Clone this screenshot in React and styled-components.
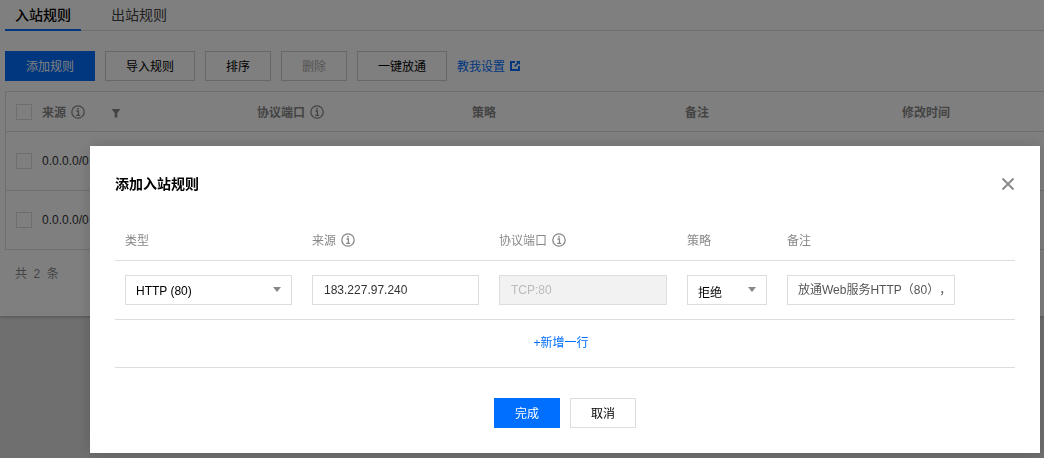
import styled, { createGlobalStyle } from "styled-components";

const FONT = `"Liberation Sans", Arial, "Noto Sans CJK SC", sans-serif`;

const GlobalStyle = createGlobalStyle`
  html, body {
    margin: 0;
    height: 100%;
    overflow: hidden;
    background: #dedede;
    font-family: ${FONT};
    font-size: 12px;
    color: #000;
  }
  * { box-sizing: border-box; }
`;

const InfoIcon = () => (
  <svg width="14" height="14" viewBox="0 0 14 14" fill="none" stroke="currentColor">
    <circle cx="7" cy="7" r="6.2" strokeWidth="1.3" />
    <path d="M5.5 6H7.4V10.2M5.2 10.3H9.2" strokeWidth="1.3" />
    <path d="M6.2 3H7.8V4.6H6.2Z" fill="currentColor" stroke="none" />
  </svg>
);

const App = () => {
  return (
    <>
      <GlobalStyle />
      <Page>
        <Tabs>
          <Tab $active>入站规则</Tab>
          <Tab>出站规则</Tab>
        </Tabs>
        <Toolbar>
          <Button $primary $width={90}>添加规则</Button>
          <Button $width={90}>导入规则</Button>
          <Button $width={66}>排序</Button>
          <Button $width={66} $disabled>删除</Button>
          <Button $width={90}>一键放通</Button>
          <HelpLink>
            教我设置
            <ExternalIcon width="10" height="10" viewBox="0 0 10 10">
              <path d="M0 0H5V2H2V8H8V5H10V10H0Z" fill="currentColor" />
              <path d="M6 0H10V4L8.6 2.6L5.2 6L4 4.8L7.4 1.4Z" fill="currentColor" />
            </ExternalIcon>
          </HelpLink>
        </Toolbar>
        <Table>
          <HeadRow>
            <SourceCell>
              <Check />
              <strong>来源</strong>
              <InfoIcon />
              <FilterIcon viewBox="0 0 10 10" width="10" height="10">
                <path d="M0.5 1H9.5L6.3 5V9.5H3.7V5Z" fill="currentColor" />
              </FilterIcon>
            </SourceCell>
            <HeadCell $width={215}><strong>协议端口</strong><InfoIcon /></HeadCell>
            <HeadCell $width={213}><strong>策略</strong></HeadCell>
            <HeadCell $width={217}><strong>备注</strong></HeadCell>
            <HeadCell $width={100}><strong>修改时间</strong></HeadCell>
          </HeadRow>
          {["0.0.0.0/0", "0.0.0.0/0"].map((source, index) => (
            <BodyRow key={index}>
              <Check />
              {source}
            </BodyRow>
          ))}
        </Table>
        <Total>共 2 条</Total>
      </Page>
      <Overlay>
        <Dialog>
          <DialogHead>
            <DialogTitle>添加入站规则</DialogTitle>
            <CloseIcon width="14" height="14" viewBox="0 0 14 14">
              <path d="M1.5 1.5L12.5 12.5M12.5 1.5L1.5 12.5" stroke="currentColor" strokeWidth="1.8" />
            </CloseIcon>
          </DialogHead>
          <FormHead>
            <TypeCol>类型</TypeCol>
            <SourceCol>来源<InfoIcon /></SourceCol>
            <PortCol>协议端口<InfoIcon /></PortCol>
            <PolicyCol>策略</PolicyCol>
            <NoteCol>备注</NoteCol>
          </FormHead>
          <FormRow>
            <TypeCol>
              <Select $width={167}>HTTP (80)<CaretShape /></Select>
            </TypeCol>
            <SourceCol>
              <Field $width={167}>183.227.97.240</Field>
            </SourceCol>
            <PortCol>
              <Field $width={168} $disabled>TCP:80</Field>
            </PortCol>
            <PolicyCol>
              <Select $width={80}>拒绝<CaretShape /></Select>
            </PolicyCol>
            <NoteCol>
              <NoteField $width={168}>放通Web服务HTTP（80），</NoteField>
            </NoteCol>
          </FormRow>
          <AddRow>+新增一行</AddRow>
          <Actions>
            <Button $primary $width={66}>完成</Button>
            <Button $width={66} $light>取消</Button>
          </Actions>
        </Dialog>
      </Overlay>
    </>
  );
};

export default App;

const Page = styled.div`
  height: 316px;
  padding: 0 0 0 5px;
  background: #fff;
  box-shadow: 0 1px 3px rgba(0, 0, 0, 0.25);
`;

const Tabs = styled.div`
  display: flex;
  height: 31px;
  border-bottom: 1px solid #ddd;
`;

const Tab = styled.div`
  width: 76px;
  margin-right: 20px;
  height: 31px;
  line-height: 30px;
  font-size: 14px;
  text-align: center;
  color: ${(p) => (p.$active ? "#000" : "#444")};
  font-weight: ${(p) => (p.$active ? 500 : 400)};
  border-bottom: 2px solid ${(p) => (p.$active ? "#006eff" : "transparent")};
`;

const Toolbar = styled.div`
  display: flex;
  align-items: center;
  gap: 10px;
  margin-top: 20px;
  height: 30px;
`;

const Button = styled.div`
  width: ${(p) => p.$width}px;
  height: 30px;
  line-height: 30px;
  text-align: center;
  font-size: 12px;
  background: ${(p) => (p.$primary ? "#006eff" : "#fff")};
  color: ${(p) => (p.$primary ? "#fff" : p.$disabled ? "#aaa" : "#000")};
  border: 1px solid ${(p) => (p.$primary ? "#006eff" : p.$light ? "#ddd" : "#d0d0d0")};
`;

const HelpLink = styled.div`
  display: flex;
  align-items: center;
  gap: 5px;
  margin-bottom: 2px;
  color: #006eff;
  font-size: 12px;
`;

const ExternalIcon = styled.svg`
  margin-top: 2px;
`;

const Table = styled.div`
  margin-top: 10px;
  width: 100%;
  border: 1px solid #ddd;
  border-right: 0;
`;

const HeadRow = styled.div`
  display: flex;
  align-items: center;
  height: 40px;
  border-bottom: 1px solid #ddd;
  color: #888;
  padding-left: 10px;

  strong {
    font-weight: 700;
  }
`;

const SourceCell = styled.div`
  display: flex;
  align-items: center;
  gap: 10px;
  width: 241px;

  svg {
    margin-left: -5px;
  }
`;

const FilterIcon = styled.svg`
  margin-left: 16px !important;
  margin-top: 3px;
`;

const HeadCell = styled.div`
  display: flex;
  align-items: center;
  gap: 5px;
  width: ${(p) => p.$width}px;
`;

const BodyRow = styled.div`
  display: flex;
  align-items: center;
  gap: 10px;
  height: 59px;
  padding-left: 10px;
  color: #333;
  border-bottom: 1px solid #ddd;

  &:last-child {
    height: 58px;
    border-bottom: 0;
  }
`;

const Check = styled.span`
  display: block;
  width: 16px;
  height: 16px;
  border: 1px solid #ddd;
  background: #fff;
`;

const Total = styled.div`
  margin: 14px 0 0 10px;
  color: #888;
  letter-spacing: 1.6px;
`;

const Overlay = styled.div`
  position: fixed;
  inset: 0;
  background: rgba(0, 0, 0, 0.5);
  padding: 146px 4px 4px 90px;
`;

const Dialog = styled.div`
  width: 950px;
  height: 307px;
  padding: 0 25px;
  background: #fff;
  box-shadow: 0 0 14px rgba(0, 0, 0, 0.15);
`;

const DialogHead = styled.div`
  display: flex;
  align-items: center;
  justify-content: space-between;
  height: 76px;
`;

const DialogTitle = styled.div`
  margin-bottom: 2px;
  font-size: 14px;
  font-weight: 700;
  color: #000;
`;

const CloseIcon = styled.svg`
  color: #888;
`;

const FormHead = styled.div`
  display: flex;
  align-items: center;
  height: 39px;
  padding-bottom: 3px;
  border-bottom: 1px solid #ddd;
  color: #888;
`;

const FormRow = styled.div`
  display: flex;
  align-items: center;
  height: 59px;
  border-bottom: 1px solid #ddd;
`;

const Col = styled.div`
  display: flex;
  align-items: center;
  gap: 5px;
  padding-left: 10px;
`;

const TypeCol = styled(Col)`
  width: 187px;
`;

const SourceCol = styled(Col)`
  width: 187px;
`;

const PortCol = styled(Col)`
  width: 188px;
`;

const PolicyCol = styled(Col)`
  width: 100px;
`;

const NoteCol = styled(Col)`
  flex: 1;
`;

const Select = styled.div`
  display: flex;
  align-items: center;
  justify-content: space-between;
  width: ${(p) => p.$width}px;
  height: 30px;
  padding: 2px 10px 0 10px;
  border: 1px solid #ddd;
  color: #000;
`;

const CaretShape = styled.span`
  width: 0;
  height: 0;
  margin-top: -3px;
  border-left: 4px solid transparent;
  border-right: 4px solid transparent;
  border-top: 5px solid #888;
`;

const Field = styled.div`
  width: ${(p) => p.$width}px;
  height: 30px;
  line-height: 28px;
  padding: 0 10px 0 11px;
  border: 1px solid #ddd;
  white-space: nowrap;
  overflow: hidden;
  background: ${(p) => (p.$disabled ? "#f2f2f2" : "#fff")};
  color: ${(p) => (p.$disabled ? "#bbb" : "#333")};
`;

const NoteField = styled(Field)`
  padding-left: 10px;
  color: #555;
  text-spacing-trim: space-all;
`;

const AddRow = styled.div`
  height: 48px;
  line-height: 46px;
  padding-right: 8px;
  text-align: center;
  color: #006eff;
  border-bottom: 1px solid #ddd;
`;

const Actions = styled.div`
  display: flex;
  justify-content: center;
  gap: 10px;
  margin-top: 30px;
`;
